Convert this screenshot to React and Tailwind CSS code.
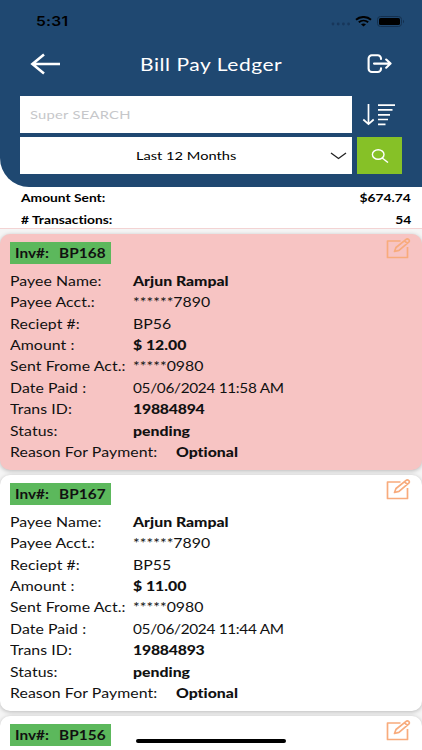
import clsx from "clsx";

const payments = [
  {
    invoice: "BP168",
    payee: "Arjun Rampal",
    account: "******7890",
    receipt: "BP56",
    amount: "$ 12.00",
    sentFrom: "*****0980",
    paidAt: "05/06/2024 11:58 AM",
    transId: "19884894",
    status: "pending",
    reason: "Optional",
    highlighted: true,
  },
  {
    invoice: "BP167",
    payee: "Arjun Rampal",
    account: "******7890",
    receipt: "BP55",
    amount: "$ 11.00",
    sentFrom: "*****0980",
    paidAt: "05/06/2024 11:44 AM",
    transId: "19884893",
    status: "pending",
    reason: "Optional",
  },
  { invoice: "BP156" },
];

// Wide lettering used all over the app
function Wide({ children, className }) {
  return (
    <span
      className={clsx(
        "inline-block origin-left scale-x-[1.2] whitespace-pre",
        className
      )}
    >
      {children}
    </span>
  );
}

function StatusBar() {
  return (
    <div className="flex h-[42px] items-center justify-between pl-[36px] pr-[17px] text-black">
      <Wide className="mt-[2px] font-['Inter',sans-serif] text-[13px] font-semibold tracking-[0.2px]">
        5:31
      </Wide>
      <div className="flex items-center">
        <svg width="20" height="4" viewBox="0 0 20 4" className="mr-[4px] mt-[6px]" fill="#17365a">
          <circle cx="2" cy="2" r="1.4" />
          <circle cx="7.2" cy="2" r="1.4" />
          <circle cx="12.4" cy="2" r="1.4" />
          <circle cx="17.6" cy="2" r="1.4" />
        </svg>
        <svg width="17" height="11" viewBox="0 0 17 11" fill="none" stroke="currentColor" strokeWidth="1.9">
          <path d="M1 3.7C5.2 0 11.8 0 16 3.7" />
          <path d="M3.8 6.3c2.7-2.3 6.7-2.3 9.4 0" />
          <path d="M6 8.3c1.5-1.2 3.5-1.2 5 0L8.5 10.6Z" fill="currentColor" stroke="none" />
        </svg>
        <svg width="28" height="11" viewBox="0 0 28 11" className="ml-[5px]">
          <rect x=".5" y=".5" width="24" height="10" rx="3" fill="none" stroke="#14304f" />
          <rect x="2" y="2" width="21" height="7" rx="1.6" fill="#000" />
          <path d="M26 3.8c1.4.7 1.4 2.7 0 3.4Z" fill="#14304f" />
        </svg>
      </div>
    </div>
  );
}

function Header() {
  return (
    <header className="h-[187px] shrink-0 rounded-bl-[29px] bg-[#1f4871]">
      <StatusBar />
      <div className="flex h-[44px] items-center pl-[30px] pr-[30px] text-white">
        <svg width="31" height="22" viewBox="0 0 31 22" fill="none" stroke="currentColor" strokeWidth="2.6">
          <path d="M30 11H2M14 1.5 2.4 11 14 20.5" />
        </svg>
        <h1 className="ml-[79px] mt-[2px] flex-1 text-[17.5px]">
          <Wide className="tracking-[0.45px]">Bill Pay Ledger</Wide>
        </h1>
        <svg width="25" height="20" viewBox="0 0 25 20" fill="none" stroke="currentColor" strokeWidth="2.1" strokeLinecap="round" strokeLinejoin="round">
          <path d="M14 5V4.5A3.3 3.3 0 0 0 10.7 1.2H4.9A3.3 3.3 0 0 0 1.6 4.5v10.2A3.3 3.3 0 0 0 4.9 18h5.8a3.3 3.3 0 0 0 3.3-3.3v-.5M7 9.6h16.5M19.2 5.5l4.4 4.1-4.4 4.1" />
        </svg>
      </div>

      <div className="mt-[10px] grid grid-cols-[332px_45px] gap-x-[5px] gap-y-[4px] pl-[20px]">
        <div className="flex h-[37px] items-center bg-white pl-[10px] text-[12.3px] text-[#c6c7ca]">
          <Wide className="mt-[2px] tracking-[0.2px]">Super SEARCH</Wide>
        </div>
        <svg width="40" height="37" viewBox="0 0 40 37" fill="none" stroke="#fff" strokeWidth="1.7">
          <path d="M11.5 8v20M6.3 23.5l5.2 4.6 5.2-4.6" />
          <path d="M21 9.2h17M21 13.8h14.5M21 18.8h12M21 23.5h10M21 28.4h7.5" />
        </svg>
        <div className="flex h-[37px] items-center bg-white pl-[116px] pr-[5px] text-[12.2px] text-black">
          <Wide className="mt-[2px]">Last 12 Months</Wide>
          <svg width="17" height="8" viewBox="0 0 17 8" className="ml-auto" fill="none" stroke="#222" strokeWidth="1.3">
            <path d="M1 1l7.5 5.5L16 1" />
          </svg>
        </div>
        <button className="flex h-[37px] items-center justify-center bg-[#86c127]">
          <svg width="18" height="14" viewBox="0 0 18 14" fill="none" stroke="#fff" strokeWidth="1.4">
            <ellipse cx="7.2" cy="5.5" rx="5.8" ry="4.8" />
            <path d="M11.2 9l5.8 4.5" />
          </svg>
        </button>
      </div>
    </header>
  );
}

function SummaryRow({ label, value }) {
  return (
    <div className="flex h-[21.5px] items-center justify-between pl-[21px] pr-[11px] text-[11.5px] font-bold text-black">
      <Wide>{label}</Wide>
      <Wide className="origin-right">{value}</Wide>
    </div>
  );
}

function DetailRow({ label, value, bold, wideLabel, className }) {
  return (
    <div className="flex h-[21.4px] items-center">
      <div className={wideLabel ? "w-[166px]" : "w-[123px]"}>
        <Wide className="tracking-[0.06px]">{label}</Wide>
      </div>
      <Wide className={clsx(bold && "font-black", className)}>{value}</Wide>
    </div>
  );
}

function EditIcon() {
  return (
    <svg width="25" height="21" viewBox="0 0 25 21" fill="none" stroke="#f8ab7c" strokeWidth="1.7" strokeLinejoin="round">
      <path d="M14.5 3H1.5v16.5h20V9" />
      <path d="M8.5 13.5l1.5-4L19.8 1.6c1-.8 2.2-.7 3 .1.8.8.8 1.8-.1 2.5L13 12.4ZM18.4 2.9l3.3 2.6" />
    </svg>
  );
}

function PaymentCard({ payment }) {
  return (
    <article
      className={clsx(
        "h-[236px] shrink-0 rounded-[10px] pl-[10px] pt-[8px] text-[13.2px] text-[#111] shadow-[0_1px_4px_rgba(0,0,0,0.25)]",
        payment.highlighted ? "bg-[#f7c4c3]" : "bg-white"
      )}
    >
      <div className="flex h-[29px] items-start justify-between pr-[11px]">
        <div className="flex h-[22px] w-[101px] items-center bg-[#5cb85c] pl-[5px] pt-[2px] text-[12.8px] font-bold">
          <div className="w-[44px]">
            <Wide>Inv#:</Wide>
          </div>
          <Wide className="tracking-[0.05px]">{payment.invoice}</Wide>
        </div>
        <div className="-mt-[4px]">
          <EditIcon />
        </div>
      </div>
      {payment.payee && (
        <>
          <DetailRow label="Payee Name:" value={payment.payee} bold />
          <DetailRow label="Payee Acct.:" value={payment.account} />
          <DetailRow label="Reciept #:" value={payment.receipt} />
          <DetailRow label="Amount :" value={payment.amount} bold />
          <DetailRow label="Sent Frome Act.:" value={payment.sentFrom} />
          <DetailRow label="Date Paid :" value={payment.paidAt} className="text-[12.8px] tracking-[-0.26px]" />
          <DetailRow label="Trans ID:" value={payment.transId} bold className="tracking-[-0.2px]" />
          <DetailRow label="Status:" value={payment.status} bold />
          <DetailRow label="Reason For Payment:" value={payment.reason} bold wideLabel />
        </>
      )}
    </article>
  );
}

export default function App() {
  return (
    <div className="relative flex h-[750px] w-[422px] flex-col overflow-hidden bg-white font-['Lato',sans-serif] [font-variant-ligatures:none]">
      <Header />
      <section className="h-[42px] shrink-0 border-b border-[#f3d3d3] bg-white">
        <SummaryRow label="Amount Sent:" value="$674.74" />
        <SummaryRow label="# Transactions:" value="54" />
      </section>
      <main className="flex flex-1 flex-col gap-[5px] overflow-hidden bg-[#f5f5f5] pt-[5px]">
        {payments.map((payment) => (
          <PaymentCard key={payment.invoice} payment={payment} />
        ))}
      </main>
      {/* Home indicator */}
      <div className="absolute bottom-[7px] left-[136px] h-[4px] w-[150px] rounded-full bg-black" />
    </div>
  );
}
